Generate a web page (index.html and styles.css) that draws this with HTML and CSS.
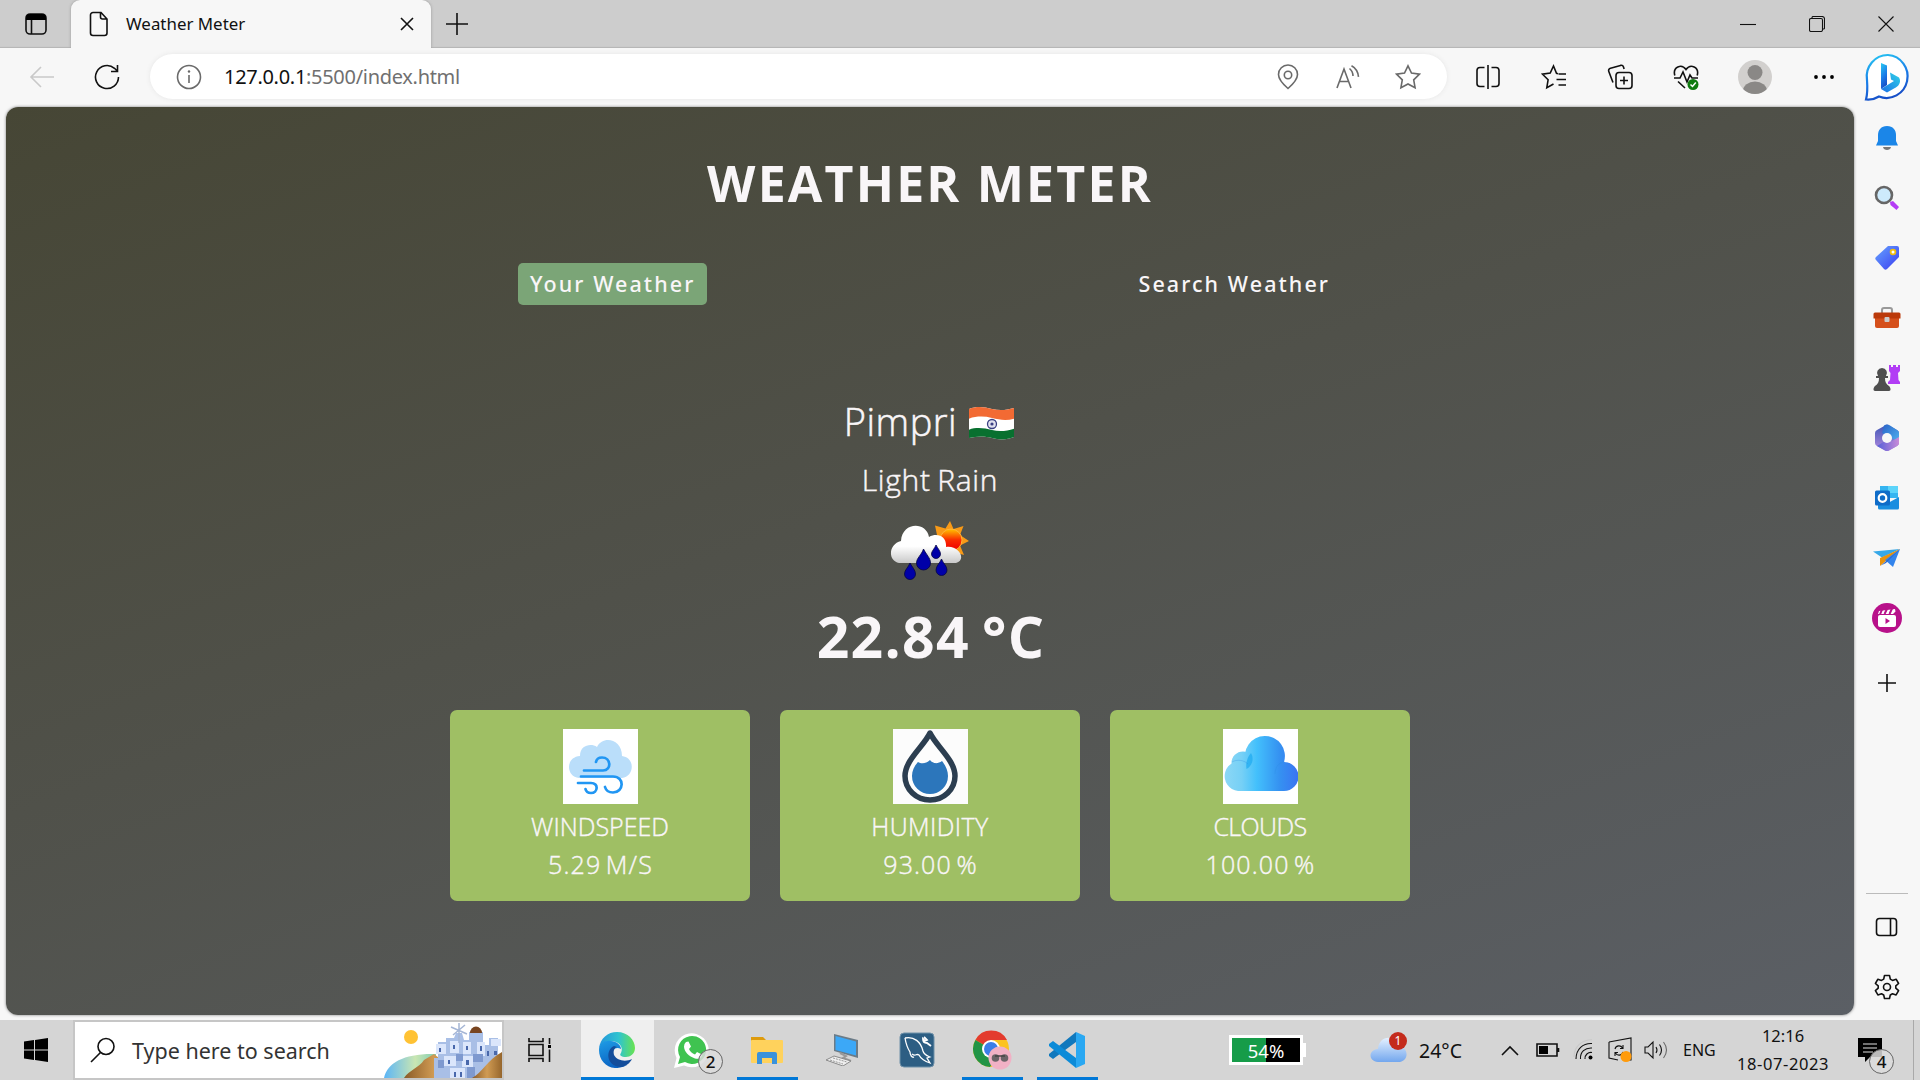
FILE: index.html
```html
<!DOCTYPE html>
<html lang="en">
<head>
<meta charset="utf-8">
<title>Weather Meter</title>
<link rel="stylesheet" href="styles.css">
</head>
<body>
<div class="screen">
  <header class="titlebar">
    <div class="slot tab-actions"><svg width="24" height="24" viewBox="0 0 24 24"><rect x="2" y="2" width="20" height="20" rx="4" class="ln"/><path d="M2 8V6a4 4 0 0 1 4-4h12a4 4 0 0 1 4 4v2z"/><path d="M7.500 8v14" class="ln"/></svg></div>
    <div class="tab">
      <svg width="20" height="26" viewBox="0 0 20 26"><path d="M4 1.500h8l6 6.500v14a2.500 2.500 0 0 1-2.500 2.500H4A2.500 2.500 0 0 1 1.500 22V4A2.500 2.500 0 0 1 4 1.500zM11.500 1.500V6a2 2 0 0 0 2 2H18" class="ln"/></svg>
      <span class="tab-title">Weather Meter</span>
      <svg class="tab-close" width="14" height="14" viewBox="0 0 14 14"><path d="M1 1l12 12M13 1L1 13" class="ln"/></svg>
    </div>
    <div class="slot new-tab"><svg width="22" height="22" viewBox="0 0 22 22"><path d="M11 0v22M0 11h22" class="ln"/></svg></div>
    <div class="window-controls">
      <div class="slot"><svg width="16" height="16" viewBox="0 0 16 16"><path d="M0 8.500h16" class="thin"/></svg></div>
      <div class="slot"><svg width="16" height="16" viewBox="0 0 16 16"><rect x=".5" y="2.500" width="13" height="13" rx="1.500" class="thin"/><path d="M3 2V1.500A1 1 0 0 1 4 .5h9A2.500 2.500 0 0 1 15.500 3v9a1 1 0 0 1-1 1h-.5" class="thin"/></svg></div>
      <div class="slot"><svg width="16" height="16" viewBox="0 0 16 16"><path d="M.5.5l15 15M15.500.5l-15 15" class="thin"/></svg></div>
    </div>
  </header>

  <nav class="toolbar">
    <div class="slot back"><svg width="26" height="24" viewBox="0 0 26 24"><path d="M25 12H2M12 2L2 12l10 10" class="ln faint"/></svg></div>
    <div class="slot reload"><svg width="26" height="26" viewBox="0 0 26 26"><path d="M24.500 13a11.500 11.500 0 1 1-4-8.700l3 3M23.500 1v6.500H17" class="ln"/></svg></div>
    <div class="omnibox">
      <div class="slot"><svg width="26" height="26" viewBox="0 0 26 26"><circle cx="13" cy="13" r="11.500" class="ln grey"/><path d="M13 11v8" class="ln grey"/><circle cx="13" cy="7.500" r="1.200" fill="#666"/></svg></div>
      <span class="url">127.0.0.1<span>:5500/index.html</span></span>
      <div class="slot"><svg width="22" height="26" viewBox="0 0 22 26"><path d="M11 24.500C7 21 1.500 16 1.500 10.500a9.500 9.500 0 0 1 19 0C20.500 16 15 21 11 24.500z" class="ln grey"/><circle cx="11" cy="11" r="3.700" class="ln grey"/></svg></div>
      <div class="slot"><svg width="24" height="24" viewBox="0 0 24 24"><path d="M1 23L8 4l7 19M3.500 16.500h9M13.500 3.500a10 10 0 0 1 3.500 7.500M15.500.8c4 2.200 6.500 6 7 11" class="ln grey"/></svg></div>
      <div class="slot"><svg width="26" height="26" viewBox="0 0 26 26"><path d="M13 1.800l3.500 7.300 8 1.100-5.800 5.600 1.400 8L13 20l-7.100 3.800 1.400-8-5.800-5.600 8-1.100z" class="ln grey"/></svg></div>
    </div>
    <div class="slot"><svg width="26" height="26" viewBox="0 0 26 26"><path d="M9.500 3.500H5A3 3 0 0 0 2 6.500v13a3 3 0 0 0 3 3h4.500M16.500 3.500H21a3 3 0 0 1 3 3v13a3 3 0 0 1-3 3h-4.500M13 1v24" class="ln"/></svg></div>
    <div class="slot"><svg width="26" height="26" viewBox="0 0 26 26"><path d="M17 9.800l-1.500-.5L12.500 2 9.200 9.100l-7.700 1.100 5.600 5.600-1.300 7.900L12.500 20M17.500 10H25M15.500 15.500H25M17.500 21H25" class="ln"/></svg></div>
    <div class="slot"><svg width="26" height="26" viewBox="0 0 26 26"><rect x="9" y="8.500" width="16" height="16" rx="3" class="ln"/><path d="M17 12.500v8M13 16.500h8M6 18.500L1.800 7.500A2.500 2.500 0 0 1 3.500 4.200l10-2.800a2.500 2.500 0 0 1 3 1.700l.6 2" class="ln"/></svg></div>
    <div class="slot"><svg width="26" height="26" viewBox="0 0 26 26"><path d="M1.800 11.500C-.5 3 8.500-.8 13 5.500c4.500-6.300 13.500-2.500 11.200 6M1 14h6l3-6 4 10 3-7 2 3h6M5 17.500l7 6.500" class="ln"/><circle cx="20" cy="20.500" r="5.500" fill="#107c10"/><path d="M17.500 20.500l2 2 3.300-4" stroke="#fff" fill="none" stroke-width="1.500"/></svg></div>
    <div class="slot avatar"><svg width="34" height="34" viewBox="0 0 34 34"><defs><clipPath id="av"><circle cx="17" cy="17" r="17"/></clipPath></defs><circle cx="17" cy="17" r="17" fill="#d2d0ce"/><g clip-path="url(#av)" fill="#8a8886"><circle cx="17" cy="12.500" r="7.500"/><ellipse cx="17" cy="31" rx="12" ry="9.500"/></g></svg></div>
    <div class="slot dots"><svg width="22" height="6" viewBox="0 0 22 6"><circle cx="3" cy="3" r="1.900"/><circle cx="11" cy="3" r="1.900"/><circle cx="19" cy="3" r="1.900"/></svg></div>
    <div class="slot bing"><svg width="48" height="50" viewBox="0 0 48 50"><defs><linearGradient id="b1" x1="0" y1="0" x2=".3" y2="1"><stop offset="0" stop-color="#27c9f2"/><stop offset=".6" stop-color="#1a7be8"/><stop offset="1" stop-color="#1750c8"/></linearGradient><linearGradient id="b2" x1="0" y1="1" x2="1" y2="0"><stop offset="0" stop-color="#1c6fe6"/><stop offset="1" stop-color="#2fd3e8"/></linearGradient></defs><path d="M25 3a21 21.500 0 1 1-9 41.500c-4 2.500-8 3.500-13 3C4.500 42 4.500 35 4 28A21 21.500 0 0 1 25 3z" fill="#fff" stroke="url(#b1)" stroke-width="2.200"/><path d="M18 11l6 2.500V33l-6 4z" fill="url(#b1)"/><path d="M27 20.500l9 5c3 5-1 9.500-5 11L24 40.500l-6-3.500 13-8-3-1.500z" fill="url(#b2)"/></svg></div>
  </nav>

  <div class="workspace">
    <main class="page">
      <h1>WEATHER METER</h1>
      <div class="tabs">
        <p class="choice current">Your Weather</p>
        <p class="choice">Search Weather</p>
      </div>
      <section class="report">
        <div class="place"><span>Pimpri</span><svg width="48" height="36" viewBox="0 0 48 36"><defs><clipPath id="fl"><path d="M1 3c8-3 15-2 23 0s15 1 22-1v29c-7 3-15 3-22 1S9 30 1 32z"/></clipPath></defs><g clip-path="url(#fl)"><path fill="#fff" d="M0 0h48v36H0z"/><path d="M0 0h48v12c-8 3-16 2-24 0S8 10 0 13z" fill="#f26a33"/><path d="M0 24c8-3 16-2 24 0s16 1 24-2v14H0z" fill="#08702f"/></g><circle cx="24" cy="18" r="4.500" fill="#e1e1ee" stroke="#3b4083" stroke-width="1.300"/><circle cx="24" cy="18" r="1.600" fill="#3b4083"/></svg></div>
        <p class="sky">Light Rain</p>
        <svg class="sky-icon" width="80" height="62" viewBox="0 0 80 62"><defs><linearGradient id="su" x2="0" y2="1"><stop offset="0" stop-color="#ffc400"/><stop offset=".5" stop-color="#fa2a00"/><stop offset=".8" stop-color="#f20d00"/></linearGradient><linearGradient id="cl" x2="0" y2="1"><stop offset=".55" stop-color="#fff"/><stop offset="1" stop-color="#c9c9c9"/></linearGradient></defs><path d="M60 1l3.500 8 10-3-3.500 9L79 21l-9 4.500 4 9.500-10-3-4 7-5-8-8-2 3-7-3-7-2-9.500 10.500 3z" fill="#f99a17"/><circle cx="61" cy="20" r="11" fill="url(#su)" stroke="#ffb43a"/><path d="M9 43C-3 40-1 24 11 21 12 2 36 1 39 17c9-5 18 0 17 10 13-2 21 13 10 16z" fill="url(#cl)"/><g fill="#0000a8" stroke="#050545" stroke-width=".8"><path d="M33.500 29c3 6 7 9 7 14a7 7 0 0 1-14 0c0-5 5-8 7-14z"/><path d="M46 25c2 4 4.500 6 4.500 9a4.500 4.500 0 0 1-9 0c0-3 3-5 4.500-9z"/><path d="M20 43c2 4 5.500 7 5.500 11a5.500 5.500 0 0 1-11 0c0-4 4-7 5.500-11z"/><path d="M51.500 39c2 5 5.500 7 5.500 11a5.500 5.500 0 0 1-11 0c0-4 4-7 5.500-11z"/></g></svg>
        <p class="temperature">22.84 °C</p>
      </section>
      <section class="cards">
        <article class="card">
          <svg width="75" height="75" viewBox="0 0 75 75"><path fill="#fff" d="M0 0h75v75H0z"/><path d="M16 49C3 48 2 28 17 27c0-11 11-13 17-9C40 6 59 10 59 27c14 2 12 21 0 22z" fill="#badefa"/><path d="M21 41.500h19c9 0 8-13-1-13-3 0-5.500 1.500-6 4.500M18 47.500h32c12 0 11 16 0 16-4 0-7-2-8-5.500M15 54h13c8 0 7 10 0 10-3 0-5-1.500-5.500-4" fill="none" stroke="#2196f3" stroke-width="2.700" stroke-linecap="round"/></svg>
          <p>WINDSPEED</p><p class="value">5.29 M/S</p>
        </article>
        <article class="card">
          <svg width="75" height="75" viewBox="0 0 75 75"><path fill="#fcfcfc" d="M0 0h75v75H0z"/><path d="M37 4C31 17 12 31 12 47a25 24 0 0 0 50 0C62 31 43 17 37 4z" fill="#fdfdfd" stroke="#2c3e50" stroke-width="5.500" stroke-linejoin="round"/><path d="M25 33c3 2 8 2 12-2 3 4 8 4 12 1 4 5 6 10 6 15a18 18 0 0 1-36 0c0-5 2-10 6-14z" fill="#2c76bb"/></svg>
          <p class="humidity">HUMIDITY</p><p class="value">93.00 %</p>
        </article>
        <article class="card">
          <svg width="75" height="75" viewBox="0 0 75 75"><defs><linearGradient id="ic" gradientUnits="userSpaceOnUse" x1="0" y1="0" x2="75" y2="0"><stop offset="0" stop-color="#8ed8f5"/><stop offset=".25" stop-color="#76d0f6"/><stop offset=".45" stop-color="#43c0fc"/><stop offset=".75" stop-color="#3592f1"/><stop offset="1" stop-color="#3a74f2"/></linearGradient></defs><path fill="#fff" d="M0 0h75v75H0z"/><g fill="url(#ic)"><circle cx="20" cy="34" r="11.500"/><path d="M15 62a15 15 0 1 1 8-28.500A20 20 0 1 1 61 33a14.500 14.500 0 0 1 0 29z"/></g><path d="M28 24a20 20 0 0 0-4.500 16A11.500 11.500 0 0 0 28 24z" fill="#12a5ee" opacity=".6"/><path d="M9 33c5-3 12-2 16 2M62 33c-6 0-10 5-10 12" fill="none" stroke="#2a8be0" stroke-opacity=".3"/></svg>
          <p class="clouds">CLOUDS</p><p class="value">100.00 %</p>
        </article>
      </section>
    </main>

    <aside class="sidebar">
      <div class="slot"><svg width="24" height="26" viewBox="0 0 24 26"><path d="M8 22h8c-.5 4-7.500 4-8 0z" fill="#777"/><path d="M12 1c-6 0-9 4-9 9v6L1 20.500h22L21 16v-6c0-5-3-9-9-9z" fill="#1b86e8"/></svg></div>
      <div class="slot"><svg width="26" height="26" viewBox="0 0 26 26"><path d="M16 17l3-1 6 6-2.500 3-6-5z" fill="#b43cf5"/><circle cx="10" cy="10" r="8" fill="#cdeafc" stroke="#666" stroke-width="2.600"/></svg></div>
      <div class="slot"><svg width="26" height="26" viewBox="0 0 26 26"><defs><linearGradient id="tg" x2="1" y2="1"><stop offset="0" stop-color="#66a4ff"/><stop offset="1" stop-color="#3a3cf0"/></linearGradient></defs><path d="M14 1h9q2 0 2 2v9L13 24q-1.500 1.500-3 0L2 15q-1.500-1.500 0-3z" fill="url(#tg)"/><circle cx="19" cy="7" r="2.400" fill="#fff" stroke="#f2bd0d" stroke-width="1.800"/></svg></div>
      <div class="slot"><svg width="28" height="24" viewBox="0 0 28 24"><path d="M9 7V4q0-2 2-2h6q2 0 2 2v3" fill="none" stroke="#999" stroke-width="2"/><path d="M2 12h24v8q0 2-2 2H4q-2 0-2-2z" fill="#d5501c"/><path d="M2 6.500h24q1.500 0 1.500 1.500v4.500H.5V8Q.5 6.500 2 6.500z" fill="#bb3a0b"/><rect x="11.500" y="11" width="5" height="5" rx="1" fill="#ccc"/></svg></div>
      <div class="slot"><svg width="28" height="28" viewBox="0 0 28 28"><path d="M16 1h2v2h2V1h3v2h2V1h2v6l-2 2 .5 7L27 18v2H15v-2l2-2 .5-7L16 7z" fill="#b23df5"/><path d="M9 4a5 5 0 0 1 4 8h2v2h-3c0 4 1 6 4 8 2 2 2 5 0 5H2c-2 0-2-3 0-5 3-2 4-4 4-8H3v-2h2a5 5 0 0 1 4-8z" fill="#4f4f4f"/></svg></div>
      <div class="slot"><svg width="26" height="28" viewBox="0 0 26 28"><defs><linearGradient id="m1" x2="0" y2="1"><stop offset="0" stop-color="#3d56b5"/><stop offset="1" stop-color="#b48be0"/></linearGradient><linearGradient id="m2" x2="1" y2="1"><stop offset="0" stop-color="#2a63c8"/><stop offset="1" stop-color="#4fb4f0"/></linearGradient><linearGradient id="m3"><stop offset="0" stop-color="#5560d8"/><stop offset="1" stop-color="#c88bd8"/></linearGradient></defs><path d="M13 .5l10 5.500q2 1 2 3v10q0 2-2 3l-8 4.500q-2 1-4 0L3 22q-2-1-2-3V9q0-2 2-3z" fill="url(#m1)"/><path d="M10 1.500q3-2 6 0L23 6q2 1 2 3v10L16 13 8 9z" fill="url(#m2)"/><path d="M3 22l8-5 7 0 7-4v6q0 2-2 3l-8 4.500q-2 1-4 0z" fill="url(#m3)"/><circle cx="13" cy="14" r="5" fill="#f7f7f7"/></svg></div>
      <div class="slot"><svg width="26" height="26" viewBox="0 0 26 26"><path d="M6 1h18v12H6z" fill="#35b5f1"/><path d="M14 1h10v7H14z" fill="#5cd4fa"/><path d="M4 12l10 6 11-6v11q0 1.500-1.500 1.500h-18Q4 24.500 4 23z" fill="#1a8ee0"/><rect x="1" y="5.500" width="15" height="15" rx="1.500" fill="#0f6cc8"/><circle cx="8.500" cy="13" r="3.800" fill="none" stroke="#fff" stroke-width="2.200"/></svg></div>
      <div class="slot"><svg width="28" height="20" viewBox="0 0 28 20"><path d="M0 3.500L27 1 9 9.500z" fill="#35a8e8"/><path d="M27 1L7 10v8z" fill="#e8920c"/><path d="M27 1L12 12l8 7z" fill="#3384ec"/><path d="M27 1L8 17.500l5-2.500z" fill="#2c67c9"/></svg></div>
      <div class="slot"><svg width="30" height="30" viewBox="0 0 30 30"><circle cx="15" cy="15" r="15" fill="#b8118a"/><rect x="6" y="12" width="18" height="12" rx="2" fill="#fff"/><path d="M6 11l1-3 16-2 .5 2.500-2.500 2.500z" fill="#fff"/><path d="M10 6.500l-2 5M15 6l-2.500 5M20 5.500L17.500 11" stroke="#b8118a" stroke-width="2"/><path d="M13.500 15l4.500 3-4.500 3z" fill="#b8118a"/></svg></div>
      <div class="slot add"><svg width="18" height="18" viewBox="0 0 18 18"><path d="M9 0v18M0 9h18" class="ln"/></svg></div>
      <div class="sidebar-end">
        <div class="slot"><svg width="24" height="20" viewBox="0 0 24 20"><rect x="1.500" y="1.500" width="20" height="17" rx="3" class="ln"/><path d="M15.500 1.500v17" class="ln"/></svg></div>
        <div class="slot"><svg width="26" height="26" viewBox="0 0 26 26"><path d="M10.500 1.500h5l.8 3.600 2.200 1.300 3.600-1.200 2.500 4.300-2.800 2.400v2.300l2.800 2.500-2.500 4.200-3.600-1.100-2.200 1.200-.8 3.500h-5l-.8-3.500-2.200-1.200-3.600 1.100-2.500-4.200 2.800-2.500v-2.300L1.400 9.500l2.500-4.300 3.600 1.200 2.200-1.300z" class="ln" stroke-linejoin="round"/><circle cx="13" cy="13" r="3.500" class="ln"/></svg></div>
      </div>
    </aside>
  </div>

  <footer class="taskbar">
    <div class="slot start"><svg width="24" height="24" viewBox="0 0 24 24"><path d="M0 3.500l10-1.400v9.400H0zM11 2l13-2v11.500H11zM0 12.500h10v9.400L0 20.500zM11 12.500h13V24l-13-2z"/></svg></div>
    <div class="search">
      <svg width="26" height="26" viewBox="0 0 26 26"><circle cx="16" cy="9.500" r="8" class="ln"/><path d="M10.500 15.500L1 25" class="ln"/></svg>
      <span>Type here to search</span>
      <svg class="scene" width="118" height="56" viewBox="0 0 118 56"><defs><linearGradient id="sea"><stop offset="0" stop-color="#5bb5f7"/><stop offset=".6" stop-color="#c9e6b2"/><stop offset="1" stop-color="#80cdb4"/></linearGradient><linearGradient id="rk"><stop offset="0" stop-color="#8a5b28"/><stop offset=".5" stop-color="#d09b53"/><stop offset="1" stop-color="#96662c"/></linearGradient></defs><circle cx="27" cy="15" r="7" fill="#ffc234"/><path d="M0 56c3-16 22-25 52-24v24z" fill="url(#sea)"/><path d="M20 56c5-8 15-10 20-18l10-6 30 24z" fill="url(#rk)"/><path d="M50 56V36h4V20h8v-4h8l2-5h6l2 7h5V10h14v13h6v-7h9v23l-9 18z" fill="#a9bfe6"/><path d="M52 22h10v10H52zM66 19h9v12h-9zM79 20h8v12h-8zM60 34h12v10H60zM78 34h11v11H78zM93 20h8v14h-8zM66 46h15v10H66zM107 17h10v7h-10z" fill="#dbe6fb"/><path d="M89 32h10v8H89zM72 32h7v7h-7zM54 38h6v8h-6zM83 45h8v11h-8z" fill="#7e99cf"/><path d="M55 26h2v4h-2zM69 23h2v4h-2zM82 24h2v4h-2zM64 38h2v4h-2zM82 38h3v5h-3zM96 24h2v5h-2zM70 50h2v5h-2zM76 50h2v5h-2zM110 29h3v4h-3zM103 29h2v5h-2z" fill="#4968ab"/><path d="M86 11a6 6.500 0 0 1 12 0z" fill="#784520"/><path d="M75 8v13M67 5l16 7M69 13l12-10M75 1v14" stroke="#a5b6d5" stroke-width="1.500"/><path d="M88 56c10-5 15-18 30-26v26z" fill="url(#rk)"/></svg>
    </div>
    <div class="slot task-view"><svg width="24" height="24" viewBox="0 0 24 24"><path d="M1 0v3.500h14V0M1 6.500h14v11H1zM1 24v-3.500h14V24M21.500 0v6M21.500 11.500V24" class="ln"/><path d="M20 7h3v3h-3z"/></svg></div>
    <div class="app active"><svg width="36" height="36" viewBox="0 0 36 36"><defs><linearGradient id="e1"><stop offset="0" stop-color="#2494dc"/><stop offset=".55" stop-color="#2fc4cf"/><stop offset="1" stop-color="#69e34f"/></linearGradient><linearGradient id="e2" x2=".4" y2="1"><stop offset="0" stop-color="#1f9de6"/><stop offset="1" stop-color="#0a62c2"/></linearGradient></defs><path d="M0 17C1 6 9 0 18 0c11 0 18 8 18 16 0 6-5 9-9 9-5 0-7-2-5-4 3-7-3-12-10-12C6 9 1 12 0 17z" fill="url(#e1)"/><path d="M0 18C0 11 6 8 12 9c5 0 10 4 10 8-8-4-12 6-7 11 4 6 11 7 15 4C14 42 0 32 0 18z" fill="url(#e2)"/><path d="M15 14c-8 3-9 20 7 21 5-.5 9-4 11-8-6 3-15 2-18-4-1-4 0-7 3-8z" fill="#134d9b"/></svg></div>
    <div class="app whatsapp"><svg width="36" height="36" viewBox="0 0 36 36"><path d="M0 36l2.500-10A17 17 0 1 1 10 33.500z" fill="#fff"/><path d="M4 32l2-7A14 14 0 1 1 11 30z" fill="#3fc350"/><path d="M12 10l2.500-.5 2.500 5-2 2.500c1 2.500 3 4.500 6 5.500l2-2.500 5 2.500c0 4-4 5-7 4-6-2-11-7-11-12q0-3 2-4.500z" fill="#fff"/></svg><span class="count">2</span></div>
    <div class="app open"><svg width="32" height="28" viewBox="0 0 32 28"><path d="M0 1h12l4 4H0z" fill="#de9b0c"/><rect y="4" width="32" height="23" rx="1" fill="#ffd25c"/><path d="M6 28V18q0-2 2-2h16q2 0 2 2v10h-5v-6H11v6z" fill="#3a92dc"/></svg></div>
    <div class="app"><svg width="32" height="32" viewBox="0 0 32 32"><path d="M8 0l24 6v18L8 17z" fill="#6b7b87"/><path d="M9.500 2L30 7.500v14L9.500 16z" fill="#3ca8f7"/><path d="M14 19l6 3-3 2 8 3" stroke="#999" stroke-width="2" fill="none"/><path d="M0 26l8-4 17 5-8 5z" fill="#eee" stroke="#8a8a8a"/><path d="M4 26l13 4M7 24l14 4" stroke="#999" stroke-dasharray="2 1"/></svg></div>
    <div class="app"><svg width="36" height="36" viewBox="0 0 36 36"><rect x="1" y="1" width="34" height="34" rx="4" fill="#2d5e83" stroke="#6f91a9"/><path d="M6 6c9-2 16 4 18 13 1 4 5 5 7 6l-3 1 3 5c-6-2-9-4-11-8-3-2-3 2-7-1M6 6c1 6 3 11 5 14 0 3 2 6 4 5" fill="none" stroke="#fff" stroke-width="1.300"/><path d="M25 5l3 3-2 1-2-2c0 3 2 4 4 4l4 3" stroke="#fff" fill="none" stroke-width="1.800"/></svg></div>
    <div class="app open"><svg width="40" height="40" viewBox="0 0 40 40"><circle cx="19" cy="19" r="18" fill="#fcc31e"/><path d="M19 19L3.400 10A18 18 0 0 1 35 10H19z" fill="#e33b2e"/><path d="M19 19L3.400 10A18 18 0 0 0 18 37l9-13z" fill="#229446"/><circle cx="19" cy="19" r="9" fill="#fff"/><circle cx="19" cy="19" r="7" fill="#3c7ee8"/><ellipse cx="28" cy="28" rx="11.500" ry="11.500" fill="#f1b1c5"/><circle cx="23.500" cy="28" r="3.800" fill="#6b6468"/><circle cx="32.500" cy="28" r="3.800" fill="#6b6468"/><path d="M23 26h10" stroke="#444" stroke-width="1.500"/></svg></div>
    <div class="app open"><svg width="36" height="36" viewBox="0 0 36 36"><path d="M27 0v10L4 27l-4-3v-2L27 0z" fill="#1078bd"/><path d="M27 36V26L4 9l-4 3v2l27 22z" fill="#0c8bd8"/><path d="M27 0l9 4v28l-9 4z" fill="#2aa8f2"/></svg></div>
    <div class="tray">
      <div class="meter"><span>54%</span></div>
      <div class="forecast"><svg width="42" height="34" viewBox="0 0 42 34"><defs><linearGradient id="wc" x2="0" y2="1"><stop offset="0" stop-color="#e5f1ff"/><stop offset="1" stop-color="#73a7ee"/></linearGradient></defs><path d="M8 29C-2 28-2 17 8 16 9 2 25 1 28 13c10 0 12 14 2 16z" fill="url(#wc)"/></svg><span class="alert">1</span></div>
      <span class="degrees">24°C</span>
      <div class="slot chevron"><svg width="18" height="11" viewBox="0 0 18 11"><path d="M1 10l8-8 8 8" class="ln"/></svg></div>
      <div class="slot"><svg width="24" height="14" viewBox="0 0 24 14"><path d="M1 1h20v12H1zM22.500 5v4" class="ln"/><path d="M3 3h9v8H3z"/></svg></div>
      <div class="slot"><svg width="22" height="22" viewBox="0 0 22 22"><circle cx="17.500" cy="18.500" r="2"/><path d="M12 20a6 6 0 0 1 7-6.500M7.500 20C7 13 12 8.500 19 9M3 20C3 10 10 4 19 4.500" class="thin"/><path d="M1 18C1 7 9 1 19 .8" class="thin faint"/></svg></div>
      <div class="slot"><svg width="26" height="26" viewBox="0 0 26 26"><path d="M2 5l22-4v22H16M2 5v16l9 2" class="ln thin"/><path d="M8 12c1-4 6-4 7.500-1M16 8v3.500h-3M16 15c-1 4-6 4-7.500 1M8 19v-3.500h3" class="thin"/><circle cx="19" cy="19.500" r="5.500" fill="#ff9b0b"/></svg></div>
      <div class="slot"><svg width="24" height="20" viewBox="0 0 24 20"><path d="M1 7h3l5-5v16l-5-5H1zM12 7q2 3 0 6" class="thin"/><path d="M15.500 4.500q4 5.500 0 11" class="thin"/><path d="M19.500 2q6 8 0 16" class="thin grey"/></svg></div>
      <span class="lang">ENG</span>
      <div class="clock"><span>12:16</span><span class="date">18-07-2023</span></div>
      <div class="notices"><svg width="24" height="26" viewBox="0 0 24 26"><path d="M0 0h24v19H12l-5 5v-5H0z"/><path d="M5 6h14M5 10h14M5 14h10" stroke="#ddd" stroke-width="1.200"/></svg><span class="count">4</span></div>
    </div>
  </footer>
</div>
</body>
</html>
```
FILE: styles.css
```css
* { box-sizing: border-box; margin: 0; padding: 0; }
body { font-family: "Noto Sans", "Open Sans", sans-serif; background: #f7f7f7; color: #111; overflow: hidden; }
svg { display: block; flex: none; }
.screen { width: 1920px; height: 1080px; display: flex; flex-direction: column; }
.ln, .thin { fill: none; stroke: #111; stroke-width: 1.6; }
.thin { stroke-width: 1.1; }
.grey { stroke: #6a6a6a; }
.faint { stroke: #c9c9c9; }
.slot { display: flex; align-items: center; justify-content: center; flex: none; }

.titlebar { height: 48px; display: flex; background: #cdcdcd; box-shadow: inset 0 -2px 1px -1px #b5b5b5; }
.titlebar .slot, .tab { padding-bottom: 1px; }
.tab-actions { width: 71px; padding-left: 1px; }
.tab { width: 360px; display: flex; align-items: center; padding-right: 17px; padding-left: 18px; background: #f7f7f7; border-radius: 9px 9px 0 0; box-shadow: 0 0 3px #999; clip-path: inset(0 -4px 0 -4px); }
.tab-title { margin-left: 17px; padding-bottom: 1px; font-size: 16.9px; }
.tab-close { margin-left: auto; }
.new-tab { width: 51px; }
.window-controls { display: flex; margin-left: auto; }
.window-controls .slot { width: 69px; }

.toolbar { height: 59px; display: flex; align-items: center; padding: 0 0 2px 10px; }
.toolbar .slot { width: 66px; }
.toolbar .back { width: 64px; }
.toolbar .avatar { width: 71px; }
.toolbar .dots { width: 68px; }
.toolbar .bing { width: 57px; }
.omnibox { width: 1297px; height: 45px; margin: 0 8px 0 10px; padding: 0 9px; display: flex; align-items: center; background: #fff; border-radius: 23px; box-shadow: 0 0 5px #e6e6e6; }
.omnibox .slot { width: 60px; }
.url { margin: 0 auto 0 5px; font-size: 20px; letter-spacing: -.3px; color: #111; }
.url span { color: #707070; }

.workspace { height: 913px; display: flex; padding: 0 0 5px 6px; }
.page { width: 1848px; height: 908px; padding-top: 46px; display: flex; flex-direction: column; align-items: center; border-radius: 12px; background: linear-gradient(160deg, #464635 0%, #50514a 45%, #5b5f65 100%); box-shadow: 0 0 3px #777; color: #f9f6f8; font-family: "Open Sans", "Noto Sans", sans-serif; }
h1 { height: 60px; line-height: 61px; font-size: 50px; font-weight: 700; letter-spacing: 2.2px; }
.tabs { width: 824px; margin-top: 50px; display: flex; justify-content: space-between; }
.choice { height: 42px; line-height: 41px; padding: 0 12px; border-radius: 5px; font-family: "Noto Sans", sans-serif; font-size: 21.5px; font-weight: 500; letter-spacing: 2.08px; }
.current { background: #7ba577; }
.report { display: flex; flex-direction: column; align-items: center; margin-top: 90px; }
.place { height: 52px; display: flex; align-items: center; gap: 11px; font-size: 38px; font-weight: 300; line-height: 53px; -webkit-text-stroke: .5px #f9f6f8; }
.place span { letter-spacing: .5px; }
.place svg { margin-top: 5px; }
.sky { height: 40px; margin-top: 12px; line-height: 41px; font-size: 30px; font-weight: 300; letter-spacing: .7px; word-spacing: -2px; -webkit-text-stroke: .45px #f9f6f8; }
.sky-icon { margin-top: 21px; }
.temperature { height: 70px; margin-top: 19px; padding-left: 2px; line-height: 70px; font-size: 57px; font-weight: 700; letter-spacing: 1.3px; word-spacing: -4px; }
.cards { display: flex; gap: 30px; margin-top: 39px; }
.card { width: 300px; height: 191px; padding-top: 19px; display: flex; flex-direction: column; align-items: center; background: #9fbf64; border-radius: 7px; font-size: 25px; font-weight: 300; line-height: 38px; -webkit-text-stroke: .4px #f9f6f8; }
.card svg { margin-bottom: 3px; }
.humidity { letter-spacing: .4px; }
.clouds { letter-spacing: -.6px; }
.value { padding-left: 1px; letter-spacing: 1.1px; word-spacing: -3px; }

.sidebar { width: 66px; padding-top: 1px; display: flex; flex-direction: column; align-items: center; }
.sidebar .slot { width: 66px; height: 60px; }
.sidebar .add { height: 70px; }
.sidebar-end { width: 42px; height: 122px; margin-top: auto; padding-top: 3px; display: flex; flex-direction: column; align-items: center; border-top: 1px solid #bbb; }

.taskbar { height: 60px; display: flex; align-items: stretch; background: #d5d5d5; }
.start { width: 73px; padding-right: 1px; }
.search { width: 431px; display: flex; align-items: center; padding-left: 15px; border: 2px solid #c6c6c6; background: #fff; }
.search span { margin-left: 16px; padding-top: 1px; font-size: 21.5px; color: #333; white-space: nowrap; }
.scene { margin-left: auto; }
.task-view { width: 72px; margin-right: 5px; }
.app { width: 61px; margin-right: 14px; flex: none; display: flex; align-items: center; justify-content: center; position: relative; border-bottom: 3px solid transparent; padding-top: 3px; }
.active { width: 73px; margin-right: 8px; background: #efefef; border-color: #0078d7; }
.active svg { margin-right: 2px; }
.app:not(.active) svg { margin-right: 2px; }
.open { border-color: #0078d7; }
.count { position: absolute; width: 25px; height: 25px; border: 1px solid #666; border-radius: 50%; background: rgba(220,220,220,.85); font-size: 17px; line-height: 23px; text-align: center; font-weight: 500; }
.whatsapp .count { left: 36px; top: 29px; }
.tray { margin-left: auto; display: flex; align-items: center; }
.meter { position: relative; width: 74px; height: 30px; border: 3px solid #fff; background: linear-gradient(90deg, #169c49 50%, #000 50%); color: #fff; font-size: 18.5px; line-height: 25px; text-align: center; }
.meter::after { content: ""; position: absolute; left: 71px; top: 5px; width: 3px; height: 14px; background: #fff; }
.forecast { position: relative; margin-left: 67px; width: 42px; }
.alert { position: absolute; left: 19px; top: -1px; width: 18px; height: 18px; border-radius: 50%; background: #c42b1c; color: #fff; font-size: 12px; line-height: 18px; text-align: center; }
.degrees { margin-left: 7px; width: 72px; padding-top: 1px; font-size: 19.5px; }
.tray .slot { width: 36px; padding-right: 2px; }
.tray .chevron { width: 40px; padding-right: 3px; }
.lang { width: 54px; margin-left: 8px; font-size: 16px; }
.clock { width: 92px; display: flex; flex-direction: column; align-items: center; font-size: 16.5px; line-height: 28px; white-space: nowrap; }
.date { letter-spacing: .6px; }
.notices { position: relative; width: 62px; height: 60px; margin-left: 29px; padding-top: 18px; }
.notices::after { content: ""; position: absolute; right: 6px; top: 0; height: 60px; width: 1px; background: #a9a9a9; }
.notices .count { left: 11px; top: 29px; }
```
